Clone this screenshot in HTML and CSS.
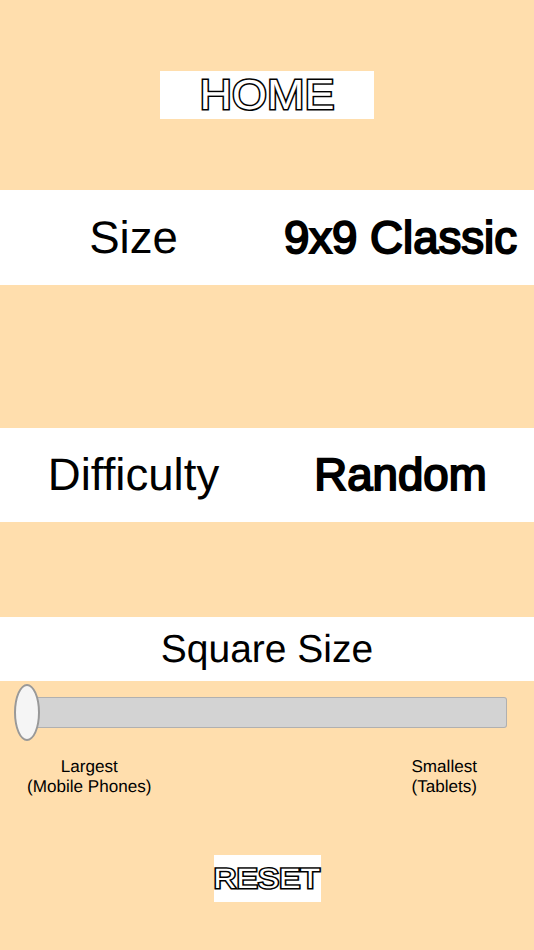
FILE: index.html
```html
<!DOCTYPE html>
<html lang="en">
<head>
    <meta charset="UTF-8">
    <meta name="viewport" content="width=device-width, initial-scale=1.0">
    <title>Settings</title>
    <link rel="stylesheet" href="styles.css">
</head>
<body>
    <main class="settings">
        <div class="button-row home-row">
            <button type="button" class="outline-button home-button"><span class="outline-text">HOME</span></button>
        </div>

        <div class="option-row size-row">
            <span class="option-label">Size</span>
            <span class="option-value">9x9 Classic</span>
        </div>

        <div class="option-row difficulty-row">
            <span class="option-label">Difficulty</span>
            <span class="option-value">Random</span>
        </div>

        <div class="slider-title">Square Size</div>
        <div class="slider-wrap">
            <div class="slider-track" role="slider" aria-valuenow="0" aria-label="Square Size">
                <div class="slider-thumb"></div>
            </div>
        </div>
        <div class="slider-labels">
            <span class="slider-label left-label">Largest<br>(Mobile Phones)</span>
            <span class="slider-label right-label">Smallest<br>(Tablets)</span>
        </div>

        <div class="button-row reset-row">
            <button type="button" class="outline-button reset-button"><span class="outline-text">RESET</span></button>
        </div>
    </main>
</body>
</html>
```

FILE: styles.css
```css
* {
    box-sizing: border-box;
}

html, body {
    margin: 0;
    padding: 0;
    height: 100%;
}

body {
    background: #ffdead;
    font-family: "Liberation Sans", Arial, sans-serif;
    color: #000;
    overflow: hidden;
    text-rendering: geometricPrecision;
}

.settings {
    height: 950px;
    padding-top: 71px;
}

.button-row {
    display: flex;
    justify-content: center;
}

.outline-button {
    display: flex;
    justify-content: center;
    align-items: center;
    background: #fff;
    border: none;
    padding: 0;
    font-family: "Liberation Sans", Arial, sans-serif;
    text-rendering: geometricPrecision;
    color: #fff;
    -webkit-text-stroke: 3px #000;
    paint-order: stroke fill;
}

.outline-text {
    display: inline-block;
    white-space: nowrap;
}

.home-button {
    width: 213.6px;
    height: 48px;
    font-size: 42px;
}

.home-button .outline-text {
    transform: scaleX(1.07);
}

.reset-button {
    width: 107px;
    height: 47px;
    font-size: 28px;
}

.reset-button .outline-text {
    transform: scaleX(1.14);
}

.option-row {
    display: grid;
    grid-template-columns: 1fr 1fr;
    align-items: center;
    height: 95px;
    background: #fff;
    text-align: center;
    font-size: 45.6px;
}

.size-row {
    margin-top: 71px;
}

.difficulty-row {
    margin-top: 143px;
    height: 94px;
}

.option-label {
    font-variant-ligatures: none;
}

.option-value {
    -webkit-text-stroke: 2px #000;
}

.slider-title {
    margin-top: 95px;
    height: 64px;
    line-height: 65px;
    background: #fff;
    text-align: center;
    font-size: 39px;
}

.slider-wrap {
    height: 62px;
    padding: 16px 27px 0 27px;
}

.slider-track {
    position: relative;
    height: 31px;
    background: #d3d3d3;
    border: 1px solid #b0b0b0;
    border-left: none;
    border-radius: 0 3px 3px 0;
}

.slider-thumb {
    position: absolute;
    left: -13px;
    top: -14px;
    width: 26px;
    height: 57px;
    background: #f5f5f5;
    border: 2px solid #999;
    border-radius: 50%;
}

.slider-labels {
    display: flex;
    justify-content: space-between;
    padding: 14px 57px 0 27px;
    font-size: 17.1px;
    line-height: 20px;
    text-align: center;
}

.reset-row {
    margin-top: 58px;
}
```
